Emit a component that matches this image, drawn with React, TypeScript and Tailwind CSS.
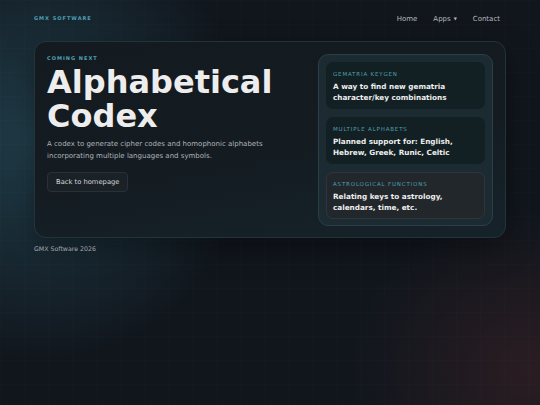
const features = [
  { label: 'GEMATRIA KEYGEN', text: 'A way to find new gematria character/key combinations', active: false },
  { label: 'MULTIPLE ALPHABETS', text: 'Planned support for: English, Hebrew, Greek, Runic, Celtic', active: false },
  { label: 'ASTROLOGICAL FUNCTIONS', text: 'Relating keys to astrology, calendars, time, etc.', active: true },
];

const FeatureCard = ({ label, text, active }: { label: string; text: string; active: boolean }) => (
  <div
    className={
      active
        ? 'rounded-[7px] border border-[#2f363b] bg-[#22272c] px-[6px] pt-[7px] pb-[5px]'
        : 'rounded-[7px] border border-transparent bg-[#132023] px-[6px] pt-[7px] pb-[5px]'
    }
  >
    <div className="text-[5.5px] leading-[8px] tracking-[0.15em] text-[#4f9fb0]">{label}</div>
    <div className="mt-[3px] text-[7.25px] font-bold leading-[11px] text-[#ededed]">{text}</div>
  </div>
);

export default function App() {
  return (
    <div
      className="relative min-h-[405px] w-full overflow-hidden bg-[#11161d] text-white"
      style={{ fontFamily: '"DejaVu Sans", Verdana, sans-serif' }}
    >
      {/* glows */}
      <div className="pointer-events-none absolute -left-[170px] -top-[80px] h-[440px] w-[420px] rounded-full bg-[radial-gradient(closest-side,rgba(42,88,104,0.6),rgba(17,22,29,0))]" />
      <div className="pointer-events-none absolute -right-[170px] top-[210px] h-[320px] w-[360px] rounded-full bg-[radial-gradient(closest-side,rgba(66,36,40,0.5),rgba(17,22,29,0))]" />
      {/* faint grid */}
      <div className="pointer-events-none absolute inset-0 bg-[linear-gradient(rgba(255,255,255,0.008)_1px,transparent_1px),linear-gradient(90deg,rgba(255,255,255,0.008)_1px,transparent_1px)] bg-[size:24px_24px]" />

      <div className="relative px-[34px]">
        <header className="flex h-[37px] items-center justify-between pt-[1px]">
          <div className="text-[5px] font-bold tracking-[0.2em] text-[#4fa0b6]">GMX SOFTWARE</div>
          <nav className="flex items-center gap-[16px] pr-[6px] text-[7px] text-[#b5b8bc]">
            <span>Home</span>
            <span className="flex items-center">
              Apps<span className="ml-[3px] text-[4px]">▼</span>
            </span>
            <span>Contact</span>
          </nav>
        </header>

        <main className="mt-[4px] flex gap-[12px] rounded-[12px] border border-[#22333a] bg-[linear-gradient(170deg,#131a20,#141c22_55%,#16222a)] px-[12px] pt-[12px] pb-[11px] shadow-[0_10px_30px_rgba(0,0,0,0.35)]">
          <div className="flex-1">
            <div className="pt-[1px] text-[5px] font-bold tracking-[0.2em] text-[#4fa3b6]">COMING NEXT</div>
            <h1 className="mt-[2px] text-[32px] font-bold leading-[34px] text-[#ededed]">
              Alphabetical
              <br />
              Codex
            </h1>
            <p className="mt-[5px] text-[7px] leading-[12px] text-[#aeb3b8]">
              A codex to generate cipher codes and homophonic alphabets
              <br />
              incorporating multiple languages and symbols.
            </p>
            <button className="mt-[10px] rounded-[4px] border border-[#283137] bg-[#1a2127] px-[8px] py-[5px] text-[6.75px] leading-[8px] text-[#d4d7da]">
              Back to homepage
            </button>
          </div>

          <div className="flex w-[175px] flex-col gap-[8px] rounded-[10px] border border-[#2a3f46] bg-[#1b2b31] px-[7px] pt-[7px] pb-[6px]">
            {features.map((f) => (
              <FeatureCard key={f.label} {...f} />
            ))}
          </div>
        </main>

        <footer className="pt-[6px] text-[6.25px] text-[#a3a8ad]">GMX Software 2026</footer>
      </div>
    </div>
  );
}
